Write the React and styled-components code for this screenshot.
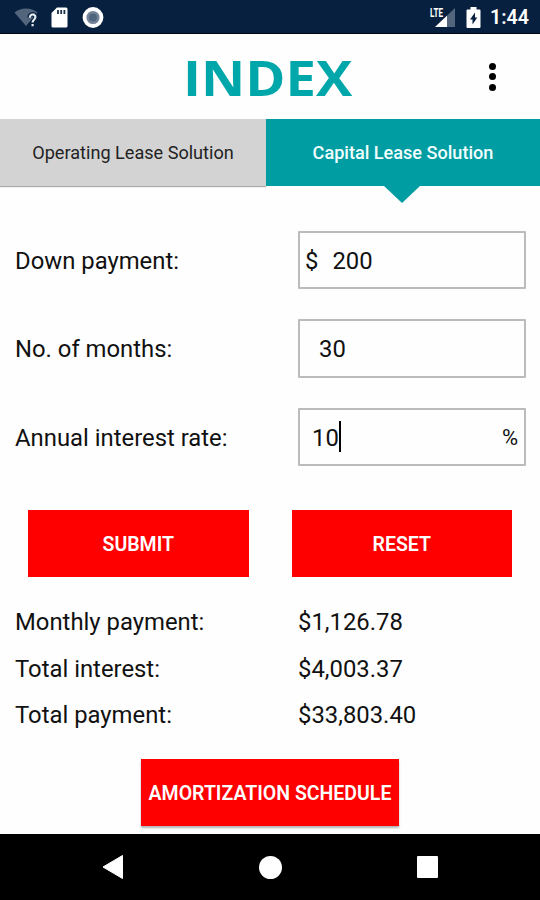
import React from 'react';
import styled, { createGlobalStyle } from 'styled-components';

const results = [
  { label: 'Monthly payment:', value: '$1,126.78' },
  { label: 'Total interest:', value: '$4,003.37' },
  { label: 'Total payment:', value: '$33,803.40' },
]

function App() {
  return (
    <Screen>
      <GlobalStyle />
      <StatusBar>
        <WifiIcon />
        <SdCardIcon />
        <RecordIcon />
        <Spacer />
        <SignalIcon />
        <BatteryIcon />
        <Clock>1:44</Clock>
      </StatusBar>
      <Header>
        <Brand>INDEX</Brand>
        <MenuButton aria-label="More options">
          <Dot />
          <Dot />
          <Dot />
        </MenuButton>
      </Header>
      <Tabs>
        <Tab>Operating Lease Solution</Tab>
        <Tab $active>Capital Lease Solution</Tab>
      </Tabs>
      <Form>
        <Row>
          <Label>Down payment:</Label>
          <Field $indent="5px">
            <Prefix>$</Prefix>
            <span>200</span>
          </Field>
        </Row>
        <Row>
          <Label>No. of months:</Label>
          <Field $indent="19px">
            <span>30</span>
          </Field>
        </Row>
        <Row>
          <Label>Annual interest rate:</Label>
          <Field $indent="12px">
            <span>10</span>
            <Caret />
            <Suffix>%</Suffix>
          </Field>
        </Row>
      </Form>
      <Actions>
        <Button>SUBMIT</Button>
        <Button>RESET</Button>
      </Actions>
      <Results>
        {results.map((item) => (
          <ResultRow key={item.label}>
            <Label>{item.label}</Label>
            <span>{item.value}</span>
          </ResultRow>
        ))}
      </Results>
      <ScheduleButton>AMORTIZATION SCHEDULE</ScheduleButton>
      <NavBar>
        <svg width="22" height="26" viewBox="0 0 22 26">
          <path d="M20.5 1.5v23L1 13z" fill="#fff" stroke="#fff" strokeLinejoin="round" />
        </svg>
        <HomeDot />
        <RecentSquare />
      </NavBar>
    </Screen>
  );
}

const WifiIcon = () => (
  <Icon width="25" height="22" viewBox="0 0 25 22">
    <path d="M.5 5.500C7 0 17 0 23.500 5.500L12 19z" fill="#53657d" />
    <path
      d="M15.600 10.600c0-4.400 6-4.400 6-.5 0 2.800-2.900 2.600-2.900 5.600"
      fill="none"
      stroke="#08203f"
      strokeWidth="4.500"
    />
    <path
      d="M15.900 10.700c0-4.200 5.500-4.200 5.500-.6 0 2.700-2.800 2.600-2.800 5.300M18.600 17v2.200"
      fill="none"
      stroke="#e5eaf0"
      strokeWidth="2.200"
    />
  </Icon>
);

const SdCardIcon = () => (
  <Icon width="17" height="22" viewBox="0 0 17 22" $left="12px">
    <path d="M6 .5h9Q16.500 .5 16.500 2v17q0 1.500-1.500 1.500H2Q.5 20.500 .5 19V6z" fill="#fff" />
    <path d="M7 3v4M10.200 3v4M13.400 3v4" stroke="#1c304c" strokeWidth="1.800" />
  </Icon>
);

const RecordIcon = () => (
  <Icon width="22" height="22" viewBox="0 0 22 22" $left="14px">
    <circle cx="11" cy="10.500" r="8.500" fill="#74849a" stroke="#fff" strokeWidth="3.800" />
    <circle cx="11" cy="10.500" r="4" fill="#52657e" />
  </Icon>
);

const SignalIcon = () => (
  <Icon width="27" height="22" viewBox="0 0 27 22">
    <path d="M26 1v19H6z" fill="#53657d" />
    <path d="M18 8.800V20H6z" fill="#fff" />
    <path d="M0 0h15v10H0z" fill="#08203f" />
    <LteText x="1" y="9.500" textLength="13" lengthAdjust="spacingAndGlyphs">LTE</LteText>
  </Icon>
);

const BatteryIcon = () => (
  <Icon width="15" height="22" viewBox="0 0 15 22" $left="10px">
    <path d="M4.500 0h6v2.500h3q1 0 1 1v16.500q0 1-1 1h-12q-1 0-1-1V3.500q0-1 1-1h3z" fill="#fff" />
    <path d="M9 5.500v5h2.300L6.500 17.500v-5H4z" fill="#08203f" />
  </Icon>
);

export default App;

const GlobalStyle = createGlobalStyle`
  body {
    margin: 0;
    background: #fff;
  }

  * {
    box-sizing: border-box;
  }
`;

const Screen = styled.div`
  width: 540px;
  height: 900px;
  display: flex;
  flex-direction: column;
  overflow: hidden;
  background: #fefefe;
  color: #111;
  font-family: Roboto, "Liberation Sans", sans-serif;
  font-size: 23.85px;
`;

const StatusBar = styled.div`
  height: 34px;
  flex: none;
  display: flex;
  align-items: flex-start;
  padding: 7px 10px 0 14px;
  background: #08203f;
  border-bottom: 1px solid #02060d;
`;

const Icon = styled.svg`
  flex: none;
  margin-left: ${(props) => props.$left || '0'};
`;

const LteText = styled.text`
  font-family: Roboto, sans-serif;
  font-size: 12px;
  font-weight: 700;
  fill: #fff;
`;

const Spacer = styled.div`
  flex: 1;
`;

const Clock = styled.span`
  width: 40px;
  margin-left: 9px;
  color: #fff;
  font-size: 19.6px;
  font-weight: 600;
  line-height: 22px;
  white-space: nowrap;
`;

const Header = styled.header`
  height: 85px;
  flex: none;
  display: flex;
  justify-content: space-between;
  align-items: center;
  padding: 0 44px 0 183px;
`;

const Brand = styled.div`
  padding-top: 1px;
  color: #00a7aa;
  font-family: "Open Sans", "Noto Sans", sans-serif;
  font-size: 49px;
  font-weight: 700;
  line-height: 60px;
  /* the wordmark is wider than the regular bold cut */
  transform: scaleX(1.11);
  transform-origin: left;
`;

const MenuButton = styled.button`
  display: flex;
  flex-direction: column;
  gap: 3.5px;
  padding: 0;
  border: 0;
  background: none;
`;

const Dot = styled.i`
  width: 7px;
  height: 7px;
  border-radius: 50%;
  background: #000;
`;

const Tabs = styled.nav`
  height: 67px;
  flex: none;
  display: grid;
  grid-template-columns: 266px 274px;
`;

const Tab = styled.div`
  position: relative;
  display: flex;
  align-items: center;
  justify-content: center;
  background: ${(props) => (props.$active ? '#009da2' : '#d3d3d3')};
  color: ${(props) => (props.$active ? '#f2ffff' : '#222')};
  font-size: 18.1px;
  font-weight: ${(props) => (props.$active ? 500 : 400)};
  box-shadow: ${(props) => (props.$active ? 'none' : '0 1px 1px #aaa')};

  /* pointer under the selected tab */
  &::after {
    content: '';
    display: ${(props) => (props.$active ? 'block' : 'none')};
    position: absolute;
    top: 100%;
    left: 118px;
    border: 18.5px solid transparent;
    border-top: 17px solid #009da2;
    border-bottom: 0;
  }
`;

const Form = styled.div`
  display: flex;
  flex-direction: column;
  gap: 30px;
  padding: 44.5px 14px 0 15px;
`;

const Row = styled.div`
  display: grid;
  grid-template-columns: 283px 228px;
  align-items: center;

  span {
    padding-top: 2px;
  }
`;

const Label = styled.span`
  white-space: nowrap;
`;

const Field = styled.div`
  height: 58.5px;
  display: flex;
  align-items: center;
  padding: 0 6px 0 ${(props) => props.$indent};
  border: 2px solid #bbb;
  border-radius: 1px;
`;

const Prefix = styled.span`
  margin-right: 14px;
`;

const Caret = styled.i`
  width: 2px;
  height: 31px;
  background: #000;
`;

const Suffix = styled.span`
  margin-left: auto;
  font-size: 22px;
`;

const Actions = styled.div`
  display: flex;
  gap: 43px;
  padding: 44px 28px 0;
`;

const Button = styled.button`
  width: 220.5px;
  height: 67px;
  padding: 2px 0 0;
  border: 0;
  background: #fe0000;
  color: #fff;
  font-family: inherit;
  font-size: 19.5px;
  font-weight: 600;
  white-space: nowrap;
`;

const Results = styled.div`
  padding: 22px 15px 0;
`;

const ResultRow = styled.div`
  display: grid;
  grid-template-columns: 283px 1fr;
  align-items: center;
  height: 46.5px;
`;

const ScheduleButton = styled(Button)`
  width: 258px;
  flex: none;
  align-self: center;
  margin-top: 20px;
  box-shadow: 0 2px 2px rgba(0, 0, 0, 0.3);
`;

const NavBar = styled.footer`
  height: 66px;
  flex: none;
  margin-top: auto;
  display: flex;
  justify-content: space-between;
  align-items: center;
  padding: 0 102px;
  background: #000;
`;

const HomeDot = styled.i`
  width: 23px;
  height: 23px;
  border-radius: 50%;
  background: #fff;
`;

const RecentSquare = styled.i`
  width: 21px;
  height: 22px;
  border-radius: 1px;
  background: #fff;
`;
